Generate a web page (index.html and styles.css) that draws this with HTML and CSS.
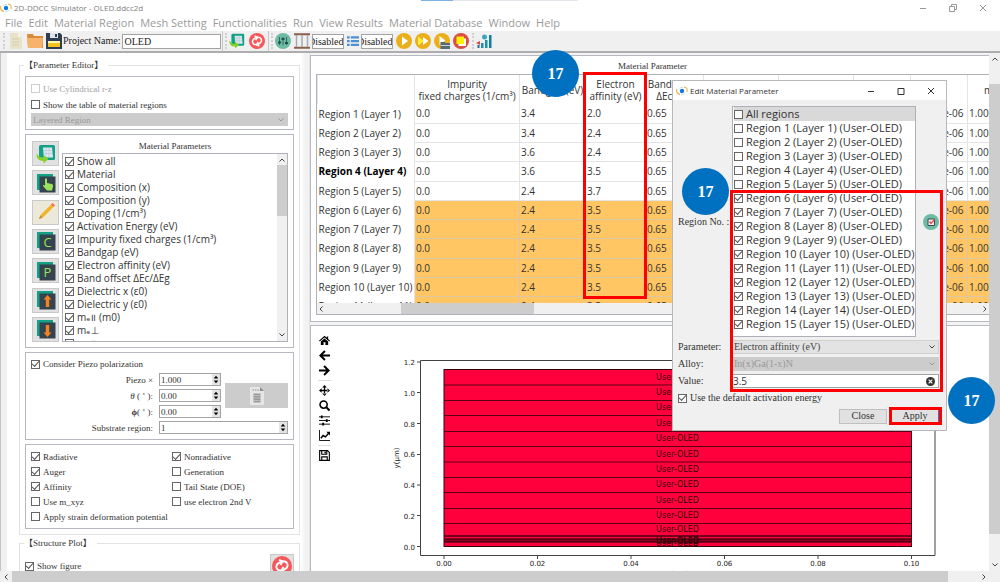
FILE: index.html
```html
<!DOCTYPE html>
<html lang="en">
<head>
<meta charset="utf-8">
<title>2D-DDCC Simulator - OLED.ddcc2d</title>
<link rel="stylesheet" href="styles.css">
</head>
<body>
<svg class="defs" aria-hidden="true">
  <symbol id="logo" viewBox="0 0 12 10"><circle cx="6" cy="5" r="2.2" fill="#0a7be0"/><path d="M1 3Q-.5 7 4 8.600M8 1.200Q12 1.500 11 6" fill="none" stroke="#e8b84a" stroke-width="1.2"/><path d="M3 2.500Q5 1 7 1.500M5 8.800Q8 9 9.500 7" fill="none" stroke="#b9dcee" stroke-width=".8"/></symbol>
  <symbol id="import" viewBox="0 0 20 20"><rect x="3" y="1" width="16" height="15" rx="1.500" fill="#12a086"/><path d="M7 3.500h9l1 10H8z" fill="#dce9f0"/><path d="M7 6.500h9M7 9.500h9M10 4v9M13 4v9" stroke="#b4c8d2" stroke-width=".7"/><path d="M.5 9Q0 17 7.500 17v2.500L12.500 15 7.500 11v2.500Q3 14 .5 9z" fill="#84d12b"/></symbol>
  <symbol id="refresh" viewBox="0 0 20 20"><circle cx="10" cy="10" r="10" fill="#f5575b"/><g fill="none" stroke="#fff" stroke-width="1.900"><path d="M10 14.500H7A4 4 0 0 1 5.500 8L9 5.500"/><path d="M10 5.500h3A4 4 0 0 1 14.500 12L11 14.500"/><path d="M7 3.800l3.500 1.400L8.500 9M13 16.200l-3.500-1.400L11.500 11"/></g></symbol>
  <symbol id="stack" viewBox="0 0 20 20"><rect x="1" y="1" width="16" height="16" fill="#16a085"/><rect x="3.500" y="3.500" width="16" height="16" fill="#34434e"/></symbol>
  <symbol id="chev" viewBox="0 0 8 6"><path d="M1.500 1.500L4 4l2.500-2.500" fill="none" stroke="currentColor"/></symbol>
  <symbol id="spin" viewBox="0 0 8 12"><path d="M4 2l2.500 3h-5zM4 10l2.500-3h-5z"/></symbol>
  <symbol id="play" viewBox="0 0 16 16"><circle cx="8" cy="8" r="8" fill="#eab01c"/></symbol>
</svg>

<div class="app">
  <header class="titlebar">
    <svg class="logo"><use href="#logo"/></svg><span>2D-DDCC Simulator - OLED.ddcc2d</span>
    <i class="top-mark"></i>
    <span class="window-buttons">
      <button aria-label="Minimize"><svg viewBox="0 0 8 8"><path d="M1 4.500h6"/></svg></button>
      <button aria-label="Restore"><svg viewBox="0 0 8 8"><path d="M.5 2.500h5v5h-5zM2.500 2.500v-2h5v5h-2"/></svg></button>
      <button aria-label="Close"><svg viewBox="0 0 8 8"><path d="M1 1l6 6M7 1L1 7"/></svg></button>
    </span>
  </header>
  <nav class="menubar">
    <button>File</button><button>Edit</button><button>Material Region</button><button>Mesh Setting</button><button>Functionalities</button><button>Run</button><button>View Results</button><button>Material Database</button><button>Window</button><button>Help</button>
  </nav>
  <div class="toolbar">
    <i class="grip"></i>
    <div class="tools file-tools">
      <button aria-label="New"><svg viewBox="0 0 16 16"><path d="M2 0h8l4 4v12H2z" fill="#e8e3c8"/><path d="M10 0v4h4" fill="#f7f4e4"/><path d="M4 6h7M4 9h7M4 12h7" stroke="#d3cda9"/></svg></button>
      <button aria-label="Open"><svg viewBox="0 0 16 16"><path d="M0 1h6l1 2h9v12H1z" fill="#d98a3a"/><path d="M0 5h16l-1 10H1z" fill="#f7b36b"/></svg></button>
      <button aria-label="Save"><svg viewBox="0 0 16 16"><path d="M0 0h14l2 2v14H0z" fill="#2d3e50"/><path d="M4 0h8v5H4z" fill="#dfe5e8"/><path d="M9 1h2v3H9z" fill="#2d3e50"/><path d="M2 8h12v6H2z" fill="#f4c21f"/><path d="M2 8h12v2H2z" fill="#fff4b0"/></svg></button>
    </div>
    <label for="project">Project Name:</label>
    <input id="project" class="project" type="text" value="OLED">
    <i class="rule"></i><i class="grip"></i>
    <div class="tools table-tools">
      <button aria-label="Import table"><svg><use href="#import"/></svg></button>
      <button aria-label="Refresh"><svg><use href="#refresh"/></svg></button>
    </div>
    <i class="rule"></i><i class="grip"></i>
    <div class="tools run-tools">
      <button aria-label="Settings"><svg viewBox="0 0 16 16"><circle cx="8" cy="8" r="8" fill="#6dbba3"/><path d="M4.500 4v8M8 4v8M11.500 4v8" stroke="#2c6b62"/><path d="M3 9.500h3M6.500 6h3M10 10h3" stroke="#244f55" stroke-width="1.800"/></svg></button>
      <button aria-label="Mesh"><svg viewBox="0 0 16 16"><path d="M0 1.200h16M0 14.800h16" stroke="#8a6048" stroke-width="2"/><path d="M2.500 2v12M8 2v12M13.500 2v12" stroke="#a5aab2" stroke-width="1.500"/></svg></button>
      <input class="mode" type="text" value="Disabled" aria-label="Mesh mode">
      <button class="list-tool" aria-label="List"><svg viewBox="0 0 16 16"><path d="M5 3h11M5 8h11M5 13h11" stroke="#4d90d4" stroke-width="3"/><path d="M0 3h3.500M0 8h3.500M0 13h3.500" stroke="#4d90d4" stroke-width="3"/></svg></button>
      <input class="mode" type="text" value="Disabled" aria-label="List mode">
      <button aria-label="Run"><svg viewBox="0 0 16 16"><use href="#play"/><path d="M6 3.500l6 4.500-6 4.500z" fill="#fff"/></svg></button>
      <button aria-label="Run all"><svg viewBox="0 0 16 16"><use href="#play"/><path d="M8 4l5.500 4L8 12z" fill="#fff"/><path d="M3 3.500L9 8l-6 4.500z" fill="#ffef3a"/></svg></button>
      <button aria-label="Run queue"><svg viewBox="0 0 16 16"><use href="#play"/><path d="M5.500 3l6 4.500-6 4.500z" fill="#fff"/><path d="M6.500 9h4l1 1h4.500v6H6.500z" fill="#566a73"/><path d="M6.500 12.500H16" stroke="#c8d2d6"/></svg></button>
      <button aria-label="Stop"><svg viewBox="0 0 16 16"><circle cx="8" cy="8" r="8" fill="#d94f43"/><path d="M5.500 5.500h7.500V13H5.500z" fill="#fff"/><path d="M3.500 3.500h7.500V11H3.500z" fill="#fff200"/></svg></button>
    </div>
    <i class="grip"></i>
    <button class="chart-tool" aria-label="Plot"><svg viewBox="0 0 16 16"><path d="M13 2h2.500v13H13z" fill="#117da3"/><path d="M9 7h2.500v8H9zM5 10h2.500v5H5z" fill="#1d91ae"/><path d="M1.500 12h2v3h-2z" fill="#2868a0"/><circle cx="8.500" cy="4" r="2.500" fill="#3aa7c0"/><path d="M0 10l4-2v4z" fill="#d24a43"/></svg></button>
  </div>

  <div class="workspace">
    <aside class="side">
      <fieldset class="group">
        <legend>【Parameter Editor】</legend>
        <div class="frame top-frame">
          <label class="check off"><input type="checkbox" disabled>Use Cylindrical r-z</label>
          <label class="check"><input type="checkbox">Show the table of material regions</label>
          <div class="select disabled"><select aria-label="Region type" disabled><option>Layered Region</option></select><svg><use href="#chev"/></svg></div>
        </div>
        <div class="frame params">
          <div class="param-tools">
            <button aria-label="Import"><svg><use href="#import"/></svg></button>
            <button aria-label="Pick"><svg viewBox="0 0 20 20"><use href="#stack"/><path d="M9 6q1-1.500 2 0v4l5 1q1.500.5 1 2.500l-1 4h-5l-4-4.500q-.5-1.500 2-.5z" fill="#9be15d"/></svg></button>
            <button class="pencil" aria-label="Edit"><svg viewBox="0 0 20 20"><path d="M3 17l1.500-4L15 2.500 17.500 5 7 15.500z" fill="#f0b62a"/><path d="M3 17l1.300-3.500 2.200 2.200z" fill="#b98e5a"/><path d="M15 2.500L16.500 1 19 3.500 17.500 5z" fill="#ee6a62"/></svg></button>
            <button aria-label="Copy"><svg viewBox="0 0 20 20"><use href="#stack"/><text x="11.500" y="16">C</text></svg></button>
            <button aria-label="Paste"><svg viewBox="0 0 20 20"><use href="#stack"/><text x="11.500" y="16">P</text></svg></button>
            <button aria-label="Move up"><svg viewBox="0 0 20 20"><use href="#stack"/><path d="M11.500 5l4 4.500h-2.300V17H9.800V9.500H7.500z" fill="#f5821f"/></svg></button>
            <button aria-label="Move down"><svg viewBox="0 0 20 20"><use href="#stack"/><path d="M11.500 18l4-4.500h-2.300V6H9.800v7.500H7.500z" fill="#f5821f"/></svg></button>
          </div>
          <div class="param-main">
            <h2>Material Parameters</h2>
            <div class="list-box">
              <div class="list">
                <label class="check"><input type="checkbox" checked>Show all</label>
                <label class="check"><input type="checkbox" checked>Material</label>
                <label class="check"><input type="checkbox" checked>Composition (x)</label>
                <label class="check"><input type="checkbox" checked>Composition (y)</label>
                <label class="check"><input type="checkbox" checked>Doping (1/cm³)</label>
                <label class="check"><input type="checkbox" checked>Activation Energy (eV)</label>
                <label class="check"><input type="checkbox" checked>Impurity fixed charges (1/cm³)</label>
                <label class="check"><input type="checkbox" checked>Bandgap (eV)</label>
                <label class="check"><input type="checkbox" checked>Electron affinity (eV)</label>
                <label class="check"><input type="checkbox" checked>Band offset ΔEc/ΔEg</label>
                <label class="check"><input type="checkbox" checked>Dielectric x (ε0)</label>
                <label class="check"><input type="checkbox" checked>Dielectric y (ε0)</label>
                <label class="check"><input type="checkbox" checked>mₑ॥ (m0)</label>
                <label class="check"><input type="checkbox" checked>mₑ⊥</label>
                <label class="check"><input type="checkbox" checked>mₕ॥</label>
              </div>
              <div class="vbar"><svg class="up"><use href="#chev"/></svg><i></i><svg><use href="#chev"/></svg></div>
            </div>
          </div>
        </div>
        <div class="frame piezo">
          <label class="check"><input type="checkbox" checked>Consider Piezo polarization</label>
          <div class="form">
            <label for="px">Piezo ×</label><span class="spin"><input id="px" type="text" value="1.000"><svg><use href="#spin"/></svg></span>
            <button class="calc" aria-label="Calculate" disabled><svg viewBox="0 0 16 20"><path d="M1 1h10l4 4v14H1z" fill="#e6e6e6"/><path d="M11 1v4h4z" fill="#8c8c8c"/><path d="M3.500 4h1.500M6 4h1.500M8.500 4H10" stroke="#8a8a8a"/><path d="M4.500 7.500h7v9h-7z" fill="#9a9a9a"/><path d="M5 9.500h6M5 12h6M5 14.500h6" stroke="#d8d8d8" stroke-width=".6"/></svg></button>
            <label for="th"><em>θ</em> ( ˚ ):</label><span class="spin"><input id="th" type="text" value="0.00"><svg><use href="#spin"/></svg></span>
            <label for="ph"><b>ϕ</b>( ˚ ):</label><span class="spin"><input id="ph" type="text" value="0.00"><svg><use href="#spin"/></svg></span>
            <label for="sub">Substrate region:</label><span class="spin wide"><input id="sub" type="text" value="1"><svg><use href="#spin"/></svg></span>
          </div>
        </div>
        <div class="frame options">
          <label class="check"><input type="checkbox" checked>Radiative</label>
          <label class="check"><input type="checkbox" checked>Nonradiative</label>
          <label class="check"><input type="checkbox" checked>Auger</label>
          <label class="check"><input type="checkbox">Generation</label>
          <label class="check"><input type="checkbox" checked>Affinity</label>
          <label class="check"><input type="checkbox">Tail State (DOE)</label>
          <label class="check"><input type="checkbox">Use m_xyz</label>
          <label class="check"><input type="checkbox">use electron 2nd V</label>
          <label class="check"><input type="checkbox">Apply strain deformation potential</label>
        </div>
      </fieldset>
      <fieldset class="group structure">
        <legend>【Structure Plot】</legend>
        <div class="structure-row">
          <label class="check"><input type="checkbox" checked>Show figure</label>
          <button aria-label="Refresh plot"><svg><use href="#refresh"/></svg></button>
        </div>
      </fieldset>
    </aside>

    <main class="content">
      <section class="table-panel">
        <h2>Material Parameter</h2>
        <div class="table-box">
          <div class="table-clip">
            <table>
              <colgroup><col class="c97"><col class="c105"><col class="c66"><col class="c60"><col class="c58"><col class="c75"><col class="c75"><col class="c57"><col class="c57"><col class="c75"></colgroup>
              <thead><tr><th></th><th>Impurity<br>fixed charges (1/cm³)</th><th>Bandgap (eV)</th><th>Electron<br>affinity (eV)</th><th>Band offset<br>ΔEc/ΔEg</th><th></th><th></th><th></th><th></th><th class="cut">m</th></tr></thead>
              <tbody>
                <tr><th>Region 1 (Layer 1)</th><td>0.0</td><td>3.4</td><td>2.0</td><td>0.65</td><td></td><td></td><td></td><td>1.0000e-06</td><td>1.000</td></tr>
                <tr><th>Region 2 (Layer 2)</th><td>0.0</td><td>3.4</td><td>2.4</td><td>0.65</td><td></td><td></td><td></td><td>1.0000e-06</td><td>1.000</td></tr>
                <tr><th>Region 3 (Layer 3)</th><td>0.0</td><td>3.6</td><td>2.4</td><td>0.65</td><td></td><td></td><td></td><td>1.0000e-06</td><td>1.000</td></tr>
                <tr class="current"><th>Region 4 (Layer 4)</th><td>0.0</td><td>3.6</td><td>3.5</td><td>0.65</td><td></td><td></td><td></td><td>1.0000e-06</td><td>1.000</td></tr>
                <tr><th>Region 5 (Layer 5)</th><td>0.0</td><td>2.4</td><td>3.7</td><td>0.65</td><td></td><td></td><td></td><td>1.0000e-06</td><td>1.000</td></tr>
                <tr class="marked"><th>Region 6 (Layer 6)</th><td>0.0</td><td>2.4</td><td>3.5</td><td>0.65</td><td></td><td></td><td></td><td>1.0000e-06</td><td>1.000</td></tr>
                <tr class="marked"><th>Region 7 (Layer 7)</th><td>0.0</td><td>2.4</td><td>3.5</td><td>0.65</td><td></td><td></td><td></td><td>1.0000e-06</td><td>1.000</td></tr>
                <tr class="marked"><th>Region 8 (Layer 8)</th><td>0.0</td><td>2.4</td><td>3.5</td><td>0.65</td><td></td><td></td><td></td><td>1.0000e-06</td><td>1.000</td></tr>
                <tr class="marked"><th>Region 9 (Layer 9)</th><td>0.0</td><td>2.4</td><td>3.5</td><td>0.65</td><td></td><td></td><td></td><td>1.0000e-06</td><td>1.000</td></tr>
                <tr class="marked"><th>Region 10 (Layer 10)</th><td>0.0</td><td>2.4</td><td>3.5</td><td>0.65</td><td></td><td></td><td></td><td>1.0000e-06</td><td>1.000</td></tr>
                <tr class="marked"><th>Region 11 (Layer 11)</th><td>0.0</td><td>2.4</td><td>3.5</td><td>0.65</td><td></td><td></td><td></td><td>1.0000e-06</td><td>1.000</td></tr>
              </tbody>
            </table>
          </div>
          <div class="hbar table-bar"><svg class="left"><use href="#chev"/></svg><i></i><svg class="right"><use href="#chev"/></svg></div>
        </div>
      </section>
      <section class="plot-panel">
        <div class="plot-tools">
          <button aria-label="Home"><svg viewBox="0 0 12 12"><path d="M6 .8L0 6.300l.8.9L6 2.600l5.200 4.600.8-.9-2-1.900V1.500H8.500V3z"/><path d="M2 7.200l4-3.500 4 3.500V11H7V8H5v3H2z"/></svg></button>
          <button aria-label="Back"><svg viewBox="0 0 12 12"><path d="M6.500 1L1.500 6l5 5M2 6h10" fill="none" stroke="#000" stroke-width="2.200"/></svg></button>
          <button aria-label="Forward"><svg viewBox="0 0 12 12"><path d="M5.500 1l5 5-5 5M10 6H0" fill="none" stroke="#000" stroke-width="2.200"/></svg></button>
          <hr>
          <button aria-label="Pan"><svg viewBox="0 0 12 12"><path d="M6 0l2.500 2.800H3.500zM6 12l2.500-2.800H3.500zM0 6l2.800-2.500v5zM12 6L9.200 3.500v5zM5.300 2h1.400v8H5.300zM2 5.300h8v1.400H2z"/></svg></button>
          <button aria-label="Zoom"><svg viewBox="0 0 12 12"><circle cx="5" cy="5" r="3.900" fill="none" stroke="#000" stroke-width="1.700"/><path d="M8 8l3.500 3.500" stroke="#000" stroke-width="2.200"/></svg></button>
          <button aria-label="Subplots"><svg viewBox="0 0 12 12"><path d="M0 2h12M0 6h12M0 10h12" stroke="#000"/><path d="M3 .5v3M8.500 4.500v3M4.500 8.500v3" stroke="#000" stroke-width="2"/></svg></button>
          <button aria-label="Axes"><svg viewBox="0 0 12 12"><path d="M.5 0v11.500H12" fill="none" stroke="#000"/><path d="M2 9l2.500-3L7 7.500l3.500-4" fill="none" stroke="#000" stroke-width="1.600"/><path d="M8 2h4v4z"/></svg></button>
          <hr>
          <button aria-label="Save"><svg viewBox="0 0 12 12"><path d="M.7.7h8.600l2 2v8.600H.7zM3 .7v4h5.500v-4M3 11.300V7.500h6v3.800" fill="none" stroke="#000" stroke-width="1.200"/><path d="M6 1.500h1.500v2.200H6z"/></svg></button>
        </div>
        <svg class="chart" viewBox="345 326 644 245" role="img" aria-label="Layer structure plot">
          <rect x="444" y="369.500" width="467.500" height="177" fill="#ff003c" stroke="#33000c"/>
          <path d="M444 385H911.500M444 400.500H911.500M444 415.500H911.500M444 431.500H911.500M444 446.500H911.500M444 462H911.500M444 477.500H911.500M444 492.500H911.500M444 508.500H911.500M444 523.500H911.500" stroke="#5c0016"/>
          <path d="M444 536H911.500" stroke="#75001c" stroke-width="2"/>
          <path d="M444 540.500H911.500" stroke="#8a0020" stroke-width="5"/>
          <path d="M444 539.500H911.500M444 541.500H911.500" stroke="#5a0014"/>
          <path d="M420.500 360.500h514.500v195H420.500z" fill="none" stroke="#444"/>
          <path d="M444 556v3M537.500 556v3M631 556v3M724.500 556v3M818 556v3M911.500 556v3M420 546.500h-3M420 515.500h-3M420 485h-3M420 454.500h-3M420 423.500h-3M420 392.500h-3M420 362h-3" stroke="#444"/>
          <g class="layer-names">
            <text x="677.500" y="379.500">User-OLED</text><text x="677.500" y="395">User-OLED</text><text x="677.500" y="410">User-OLED</text><text x="677.500" y="425.500">User-OLED</text><text x="677.500" y="441">User-OLED</text><text x="677.500" y="456.500">User-OLED</text><text x="677.500" y="472">User-OLED</text><text x="677.500" y="487">User-OLED</text><text x="677.500" y="502.500">User-OLED</text><text x="677.500" y="517.500">User-OLED</text><text x="677.500" y="532">User-OLED</text><text x="677.500" y="542.500">User-OLED</text><text x="677.500" y="544">User-OLED</text><text x="677.500" y="546">User-OLED</text>
          </g>
          <g class="ticks-y"><text x="415" y="365">1.2</text><text x="415" y="395.500">1.0</text><text x="415" y="426.500">0.8</text><text x="415" y="457">0.6</text><text x="415" y="488">0.4</text><text x="415" y="518.500">0.2</text><text x="415" y="549.500">0.0</text></g>
          <g class="ticks-x"><text x="444" y="566">0.00</text><text x="537.500" y="566">0.02</text><text x="631" y="566">0.04</text><text x="724.500" y="566">0.06</text><text x="818" y="566">0.08</text><text x="911.500" y="566">0.10</text><text x="677.500" y="576">x(μm)</text><text transform="translate(399 458) rotate(-90)">y(μm)</text></g>
        </svg>
      </section>
    </main>
    <div class="vbar main-bar"><svg class="up"><use href="#chev"/></svg><i></i><svg><use href="#chev"/></svg></div>
  </div>
  <div class="hbar app-bar"><svg class="left"><use href="#chev"/></svg><i></i><svg class="right"><use href="#chev"/></svg></div>

  <div class="dialog" role="dialog" aria-label="Edit Material Parameter">
    <div class="dialog-title">
      <svg class="logo"><use href="#logo"/></svg><span>Edit Material Parameter</span>
      <span class="window-buttons">
        <button aria-label="Minimize"><svg viewBox="0 0 8 8"><path d="M1 4.500h6"/></svg></button>
        <button aria-label="Maximize"><svg viewBox="0 0 8 8"><path d="M1 1.500h6v6H1z"/></svg></button>
        <button aria-label="Close"><svg viewBox="0 0 8 8"><path d="M1 1l6 6M7 1L1 7"/></svg></button>
      </span>
    </div>
    <div class="dialog-body">
      <span>Region No.&nbsp;:</span>
      <div class="region-row">
        <div class="region-list">
          <label class="check all"><input type="checkbox">All regions</label>
          <label class="check"><input type="checkbox">Region 1 (Layer 1) (User-OLED)</label>
          <label class="check"><input type="checkbox">Region 2 (Layer 2) (User-OLED)</label>
          <label class="check"><input type="checkbox">Region 3 (Layer 3) (User-OLED)</label>
          <label class="check"><input type="checkbox">Region 4 (Layer 4) (User-OLED)</label>
          <label class="check"><input type="checkbox">Region 5 (Layer 5) (User-OLED)</label>
          <label class="check"><input type="checkbox" checked>Region 6 (Layer 6) (User-OLED)</label>
          <label class="check"><input type="checkbox" checked>Region 7 (Layer 7) (User-OLED)</label>
          <label class="check"><input type="checkbox" checked>Region 8 (Layer 8) (User-OLED)</label>
          <label class="check"><input type="checkbox" checked>Region 9 (Layer 9) (User-OLED)</label>
          <label class="check"><input type="checkbox" checked>Region 10 (Layer 10) (User-OLED)</label>
          <label class="check"><input type="checkbox" checked>Region 11 (Layer 11) (User-OLED)</label>
          <label class="check"><input type="checkbox" checked>Region 12 (Layer 12) (User-OLED)</label>
          <label class="check"><input type="checkbox" checked>Region 13 (Layer 13) (User-OLED)</label>
          <label class="check"><input type="checkbox" checked>Region 14 (Layer 14) (User-OLED)</label>
          <label class="check"><input type="checkbox" checked>Region 15 (Layer 15) (User-OLED)</label>
        </div>
        <button class="select-all" aria-label="Select checked"><svg viewBox="0 0 16 16"><circle cx="8" cy="8" r="8" fill="#6dbba3"/><path d="M5 5h6.500v6.500H5z" fill="#eee" stroke="#3b4a5a"/><path d="M6.500 7.500l1.500 2 3.500-4" fill="none" stroke="#e04a4a" stroke-width="1.300"/></svg></button>
      </div>
      <label for="param">Parameter:</label>
      <div class="select"><select id="param"><option>Electron affinity (eV)</option></select><svg><use href="#chev"/></svg></div>
      <label for="alloy">Alloy:</label>
      <div class="select disabled"><select id="alloy" disabled><option>In(x)Ga(1-x)N</option></select><svg><use href="#chev"/></svg></div>
      <label for="value">Value:</label>
      <div class="value"><input id="value" type="text" value="3.5"><button aria-label="Clear"><svg viewBox="0 0 10 10"><circle cx="5" cy="5" r="5" fill="#333"/><path d="M3 3l4 4M7 3L3 7" stroke="#fff" stroke-width="1.300"/></svg></button></div>
      <label class="check full"><input type="checkbox" checked>Use the default activation energy</label>
      <div class="actions full"><button>Close</button><button class="primary">Apply</button></div>
    </div>
  </div>

  <i class="box box-column"></i><i class="box box-regions"></i><i class="box box-apply"></i>
  <b class="step step-column">17</b><b class="step step-regions">17</b><b class="step step-apply">17</b>
</div>
</body>
</html>
```
FILE: styles.css
```css
* { box-sizing: border-box; }
body { margin: 0; font: 10px/12px "Liberation Serif", "Noto Sans CJK TC", serif; color: #333; background: #fff; }
button { margin: 0; padding: 0; border: 0; background: none; font: inherit; color: inherit; }
input, select { margin: 0; padding: 0; font: inherit; color: inherit; min-width: 0; border-radius: 0; }
input[type="text"] { border: 1px solid #a3a3a3; background: #fff; }
h2 { margin: 0; font: inherit; font-size: 9px; text-align: center; }
svg { display: block; }
.defs { position: absolute; width: 0; height: 0; }

.app { position: relative; display: flex; flex-direction: column; height: 100vh; min-height: 582px; overflow: hidden; }
.logo { width: 12px; height: 10px; }

.titlebar { display: flex; align-items: center; gap: 2px; height: 15px; flex: none; position: relative; color: #808080; font: 8px/14px "Open Sans", sans-serif; }
.top-mark { position: absolute; top: 0; left: 421px; width: 157px; height: 1px; background: linear-gradient(90deg, #7eb2e4 32px, #e2e6ea 32px); }
.window-buttons { margin-left: auto; display: flex; }
.window-buttons button { width: 30px; display: grid; place-items: center; }
.window-buttons svg { width: 8px; height: 8px; fill: none; stroke: #333; }
.titlebar .window-buttons { margin-right: 2px; }
.titlebar .window-buttons svg { stroke: #999; }

.menubar { display: flex; gap: 6px; height: 16px; flex: none; padding-left: 5px; color: #9a9a9a; font: 11px/16px "Open Sans", sans-serif; }

.toolbar { display: flex; align-items: center; height: 22px; flex: none; padding-left: 2px; background: #f0f0f0; border-bottom: 2px solid #adadb0; color: #222; }
.grip { width: 2px; height: 16px; margin: 0 2px 0 1px; border-left: 2px dotted #d0d0d0; flex: none; }
.rule { width: 1px; height: 20px; background: #c8c8c8; margin: 0 1px; flex: none; }
.tools { display: flex; align-items: center; gap: 4px; }
.tools svg, .chart-tool svg { width: 16px; height: 16px; }
.file-tools { margin: 0 1px; gap: 3px; }
.table-tools { margin-right: 2px; }
.toolbar input { height: 15px; }
.project { width: 99px; padding-left: 1px; margin-left: 2px; }
.mode { width: 32px; direction: rtl; }
.run-tools { margin-right: 2px; gap: 3px; }
.run-tools .mode { margin-left: -1px; }
.list-tool svg { width: 12px; height: 12px; }

.workspace { flex: 1; min-height: 0; display: flex; }
.side { width: 310px; flex: none; overflow: hidden; padding: 6px 9px 0 18px; border-left: 1px solid #c4c4c8; border-right: 1px solid #e4e4e4; background: linear-gradient(90deg, #f0f0f0 6px, #fff 6px, #fff 300px, #f2f2f2 304px); font-size: 9px; display: flex; flex-direction: column; gap: 2px; }
.group { margin: 0; min-width: 0; padding: 4px 5px 5px; border: 1px solid #e2e2e2; display: flex; flex-direction: column; gap: 4px; }
.group legend { padding: 0 5px 0 0; margin-left: -1px; line-height: 13px; }
.frame { border: 1px solid #b7b9c2; }
.check { display: flex; align-items: center; gap: 3px; white-space: nowrap; }
.check input { appearance: none; flex: none; width: 9px; height: 9px; border: 1px solid #666; background: #fff; display: grid; place-items: center; }
.check input:checked::after { content: ""; width: 6px; height: 3px; border: solid #555; border-width: 0 0 1px 1px; transform: translateY(-1px) rotate(-48deg); }
.check.off { color: #a0a0a0; }
.check.off input { border-color: #ccc; }
.top-frame { display: grid; grid-template-rows: 15px 15px 13px; gap: 1px; padding: 4px 5px 3px; }
.select { display: flex; align-items: center; background: #e3e3e3; border: 1px solid #d0d0d0; min-width: 0; color: #444; }
.select select { appearance: none; flex: 1; border: 0; background: none; padding-left: 1px; opacity: 1; line-height: 12px; }
.select svg { width: 8px; height: 6px; margin-right: 2px; }
.select.disabled { background: #ccc; border-color: #ccc; color: #999; }

.params { display: flex; gap: 3px; height: 214px; padding: 6px 5px 5px 6px; }
.param-tools { display: flex; flex-direction: column; justify-content: space-between; }
.param-tools button { width: 27px; height: 25px; border: 1px solid #c9c9c9; background: #e1e1e1; display: grid; place-items: center; }
.param-tools svg { width: 20px; height: 20px; }
.param-tools .pencil { background: #ece9db; }
.param-tools text { font: 13px "Open Sans", sans-serif; fill: #9be15d; text-anchor: middle; }
.param-main { flex: 1; min-width: 0; display: flex; flex-direction: column; }
.param-main h2 { line-height: 10px; margin-bottom: 2px; }
.list-box { flex: 1; min-height: 0; display: flex; border: 1px solid #b0b0b8; }
.list { flex: 1; overflow: hidden; padding: 1px 0 0 2px; font: 10px/13px "Open Sans", "DejaVu Sans", sans-serif; }
.list .check { height: 13px; }
.vbar { width: 10px; display: flex; flex-direction: column; align-items: center; background: #f0f0f0; color: #444; padding: 3px 0; }
.vbar svg, .hbar svg { width: 8px; height: 6px; flex: none; }
.up { transform: rotate(180deg); }
.left { transform: rotate(90deg); }
.right { transform: rotate(-90deg); }
.vbar i { width: 100%; background: #cdcdcd; height: 51px; margin: 2px 0 auto; }
.hbar { display: flex; align-items: center; background: #f0f0f0; color: #444; }
.hbar i { background: #cdcdcd; height: 100%; }

.piezo { padding: 5px; }
.form { display: grid; grid-template-columns: 124px 62px 1fr; grid-auto-rows: 13px; gap: 3px 4px; align-items: center; margin-top: 3px; }
.form label { text-align: right; margin-right: 2px; }
.spin { display: flex; height: 13px; border: 1px solid #a3a3a3; }
.spin input[type="text"] { flex: 1; border: 0; padding-left: 1px; }
.spin svg { width: 8px; height: 11px; background: #e4e4e4; }
.wide { grid-column: 2 / 4; }
.calc { grid-column: 3; grid-row: 1 / 4; height: 25px; background: #ccc; display: grid; place-items: center; }
.calc svg { width: 16px; height: 20px; }
.options { display: grid; grid-template-columns: 141px 1fr; grid-auto-rows: 15px; padding: 4px 5px; }
.options .check:last-child { grid-column: 1 / 3; }
.structure { height: 80px; flex: none; }
.structure-row { display: flex; justify-content: space-between; align-items: center; }
.structure-row button { width: 24px; height: 24px; background: #e1e1e1; border: 1px solid #c9c9c9; display: grid; place-items: center; }
.structure-row svg { width: 20px; height: 20px; }

.content { flex: 1; min-width: 0; display: flex; flex-direction: column; gap: 3px; padding-top: 2px; background: #f4f4f5; }
.table-panel { border: 1px solid #b7b9c2; border-right: 0; background: #fff; padding: 4px 0 6px 5px; height: 267px; display: flex; flex-direction: column; }
.table-panel h2 { line-height: 13px; margin-bottom: 1px; }
.table-box { flex: 1; min-height: 0; border: 1px solid #b0b0b8; border-right: 0; display: flex; flex-direction: column; }
.table-clip { flex: 1; min-height: 0; overflow: hidden; }
.table-bar { height: 11px; justify-content: space-between; }
.table-bar i { width: 133px; margin: 0 auto 0 76px; }
table { table-layout: fixed; border-collapse: collapse; width: 725px; font: 10px/12px "Open Sans", "DejaVu Sans", sans-serif; }
.c97 { width: 97px; } .c105 { width: 105px; } .c66 { width: 66px; } .c60 { width: 60px; } .c58 { width: 58px; } .c75 { width: 75px; } .c57 { width: 57px; }
th, td { padding: 0 0 0 1px; font-weight: 400; white-space: nowrap; text-align: left; border: 1px solid #e4e4e4; border-top: 0; }
thead th { height: 29px; text-align: center; padding: 0; border-bottom: 0; }
thead .cut { text-align: left; padding-left: 16px; }
tbody tr { height: 19px; }
tbody tr:nth-child(4n) { height: 20px; }
tbody th { border-left: 0; border-bottom: 0; }
.current th { font-weight: 700; color: #000; }
.marked td { background: #ffc663; border-color: #dcc7a0; }
.plot-panel { flex: 1; min-height: 0; border: 1px solid #b7b9c2; border-width: 1px 0 0 1px; background: #fff; display: flex; overflow: hidden; align-items: flex-start; }
.plot-tools { width: 34px; flex: none; padding: 9px 0 0 7px; display: flex; flex-direction: column; gap: 4px; }
.plot-tools button { width: 12px; height: 11px; display: grid; place-items: center; }
.plot-tools svg { width: 11px; height: 11px; }
.plot-tools hr { width: 13px; height: 1px; margin: 0; border: 0; background: #ddd; }
.chart { flex: 1; min-width: 0; font-family: "DejaVu Sans", sans-serif; }
.layer-names { font-size: 8px; text-anchor: middle; fill: #3a000d; }
.ticks-x { font-size: 7px; text-anchor: middle; fill: #222; }
.ticks-y { font-size: 7px; text-anchor: end; fill: #222; }
.main-bar { width: 11px; flex: none; }
.main-bar i { height: 450px; margin-top: 22px; }
.app-bar { height: 11px; flex: none; padding: 0 12px 0 2px; }
.app-bar i { flex: 1; margin: 0 32px 0 2px; }

.dialog { position: absolute; left: 672px; top: 80px; width: 275px; background: #f0f0f0; border: 1px solid #b8b8b8; }
.dialog-title { display: flex; align-items: center; height: 19px; gap: 2px; padding-left: 3px; background: #fff; font: 8px/16px "Open Sans", sans-serif; }
.dialog-body { display: grid; grid-template-columns: 54px 1fr; grid-template-rows: 231px 14px 14px 14px 14px 16px; align-items: center; row-gap: 3px; padding: 6px 7px 6px 5px; }
.dialog-body > :first-child { white-space: nowrap; }
.region-row { display: flex; align-items: center; justify-content: space-between; align-self: stretch; }
.region-list { width: 184px; height: 100%; background: #fff; border: 1px solid #b0b0b8; font: 11px/14px "Open Sans", sans-serif; padding-left: 1px; }
.region-list .check { height: 14px; }
.all { background: #d9d9d9; }
.select-all svg { width: 16px; height: 16px; }
.dialog .select, .value { height: 14px; }
.value { display: flex; align-items: center; background: #fff; border: 1px solid #a3a3a3; padding-right: 3px; font-family: "Open Sans", sans-serif; }
.value input[type="text"] { flex: 1; border: 0; height: 12px; }
.value svg { width: 9px; height: 9px; }
.full { grid-column: 1 / 3; }
.actions { display: flex; justify-content: flex-end; gap: 4px; }
.actions button { width: 48px; height: 15px; background: #e1e1e1; border: 1px solid #c0c0c0; line-height: 12px; }
.actions .primary { border-color: #2a7bd0; }

.box { position: absolute; border: 3px solid #fe0000; }
.box-column { left: 583px; top: 72px; width: 64px; height: 227px; }
.box-regions { left: 730px; top: 190px; width: 213px; height: 202px; }
.box-apply { left: 889px; top: 407px; width: 53px; height: 18px; }
.step { position: absolute; width: 47px; height: 47px; border-radius: 50%; background: #0070c0; color: #fff; font-size: 16px; display: grid; place-items: center; }
.step-column { left: 532px; top: 50px; }
.step-regions { left: 682px; top: 168px; }
.step-apply { left: 948px; top: 377px; }
```
